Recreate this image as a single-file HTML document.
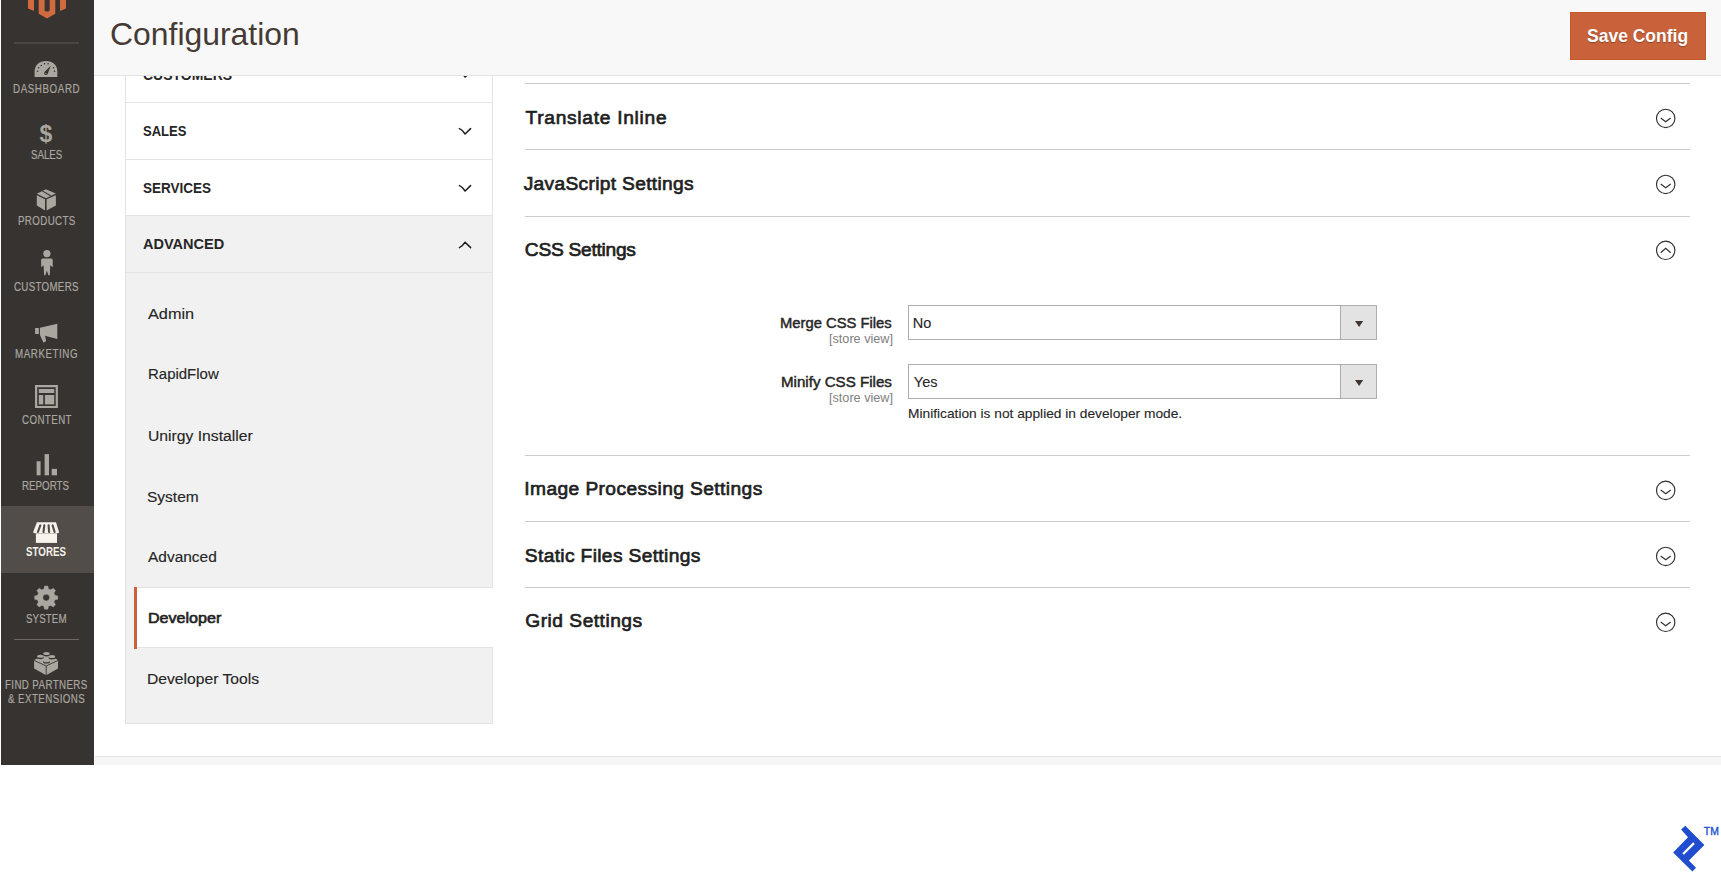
<!DOCTYPE html>
<html><head><meta charset="utf-8">
<style>
html,body{margin:0;padding:0;}
body{width:1721px;height:872px;overflow:hidden;background:#fff;position:relative;font-family:"Liberation Sans",sans-serif;}
.a{position:absolute;white-space:nowrap;line-height:1;}
#side{position:absolute;left:1px;top:0;width:93px;height:765px;background:#373330;}
#hdr{z-index:5;position:absolute;left:94px;top:0;width:1627px;height:75px;background:#f8f8f8;border-bottom:1px solid #e3e3e3;}
.hl{position:absolute;height:1px;background:#e3e3e3;}
.sec{position:absolute;left:525px;width:1165px;height:1px;background:#cccccc;}
</style></head><body>

<!-- Sidebar -->
<div id="side"></div>
<div class="a" style="left:1px;top:506px;width:93px;height:67px;background:#524d49;"></div>
<div class="a" style="left:14px;top:42px;width:65px;height:2px;background:#4a4643;"></div>
<div class="a" style="left:14px;top:639px;width:65px;height:1px;background:#6e6661;"></div>

<!-- Nav panel -->
<div class="a" style="left:125px;top:40px;width:366px;height:176px;background:#fff;border-left:1px solid #e3e3e3;border-right:1px solid #e3e3e3;"></div>
<div class="a" style="left:125px;top:216px;width:366px;height:507px;background:#f1f1f1;border-left:1px solid #e3e3e3;border-right:1px solid #e3e3e3;border-bottom:1px solid #e3e3e3;"></div>
<div class="hl" style="left:126px;top:102px;width:366px;"></div>
<div class="hl" style="left:126px;top:159px;width:366px;"></div>
<div class="hl" style="left:126px;top:215px;width:366px;"></div>
<div class="hl" style="left:126px;top:272px;width:366px;"></div>
<div class="a" style="left:134px;top:587px;width:359px;height:61px;background:#fff;border-top:1px solid #e3e3e3;border-bottom:1px solid #e3e3e3;box-sizing:border-box;"></div>
<div class="a" style="left:134px;top:587px;width:3px;height:62px;background:#c9623a;"></div>

<!-- Header -->
<div id="hdr"></div>
<div class="a" style="z-index:6;left:1570px;top:12px;width:136px;height:48px;box-sizing:border-box;background:#c9613a;border:1px solid #c4582a;"></div>

<!-- Footer band -->
<div class="a" style="left:95px;top:756px;width:1626px;height:8px;background:#f5f5f5;border-top:1px solid #e3e3e3;"></div>

<!-- Sections -->
<div class="sec" style="top:83px;"></div>
<div class="sec" style="top:149px;"></div>
<div class="sec" style="top:216px;"></div>
<div class="sec" style="top:455px;"></div>
<div class="sec" style="top:521px;"></div>
<div class="sec" style="top:587px;"></div>

<!-- Fields -->

<div class="a" style="left:908px;top:305px;width:469px;height:35px;box-sizing:border-box;border:1px solid #adadad;background:#fff;"></div>
<div class="a" style="left:1340px;top:306px;width:36px;height:33px;background:#e3e3e3;border-left:1px solid #adadad;box-sizing:border-box;"></div>

<div class="a" style="left:908px;top:364px;width:469px;height:35px;box-sizing:border-box;border:1px solid #adadad;background:#fff;"></div>
<div class="a" style="left:1340px;top:365px;width:36px;height:33px;background:#e3e3e3;border-left:1px solid #adadad;box-sizing:border-box;"></div>

<!--TXT-->
<div class="a" style="left:12.90px;top:82.53px;font-size:12.2px;font-weight:400;color:#aaa6a0;-webkit-text-stroke:0.2px #aaa6a0;letter-spacing:0.750px;transform:scaleX(0.8);transform-origin:0 0;">DASHBOARD</div>
<div class="a" style="left:30.90px;top:148.88px;font-size:12.2px;font-weight:400;color:#aaa6a0;-webkit-text-stroke:0.2px #aaa6a0;letter-spacing:-0.062px;transform:scaleX(0.8);transform-origin:0 0;">SALES</div>
<div class="a" style="left:17.90px;top:214.68px;font-size:12.2px;font-weight:400;color:#aaa6a0;-webkit-text-stroke:0.2px #aaa6a0;letter-spacing:0.464px;transform:scaleX(0.8);transform-origin:0 0;">PRODUCTS</div>
<div class="a" style="left:13.80px;top:281.28px;font-size:12.2px;font-weight:400;color:#aaa6a0;-webkit-text-stroke:0.2px #aaa6a0;letter-spacing:0.375px;transform:scaleX(0.8);transform-origin:0 0;">CUSTOMERS</div>
<div class="a" style="left:14.90px;top:347.68px;font-size:12.2px;font-weight:400;color:#aaa6a0;-webkit-text-stroke:0.2px #aaa6a0;letter-spacing:0.719px;transform:scaleX(0.8);transform-origin:0 0;">MARKETING</div>
<div class="a" style="left:21.80px;top:413.88px;font-size:12.2px;font-weight:400;color:#aaa6a0;-webkit-text-stroke:0.2px #aaa6a0;letter-spacing:0.500px;transform:scaleX(0.8);transform-origin:0 0;">CONTENT</div>
<div class="a" style="left:22.30px;top:479.68px;font-size:12.2px;font-weight:400;color:#aaa6a0;-webkit-text-stroke:0.2px #aaa6a0;letter-spacing:-0.000px;transform:scaleX(0.8);transform-origin:0 0;">REPORTS</div>
<div class="a" style="left:26.10px;top:545.78px;font-size:12.2px;font-weight:700;color:#f7f3eb;letter-spacing:0.025px;transform:scaleX(0.8);transform-origin:0 0;">STORES</div>
<div class="a" style="left:25.70px;top:612.68px;font-size:12.2px;font-weight:400;color:#aaa6a0;-webkit-text-stroke:0.2px #aaa6a0;letter-spacing:0.125px;transform:scaleX(0.8);transform-origin:0 0;">SYSTEM</div>
<div class="a" style="left:5.10px;top:678.73px;font-size:12.2px;font-weight:400;color:#aaa6a0;-webkit-text-stroke:0.2px #aaa6a0;letter-spacing:0.479px;transform:scaleX(0.8);transform-origin:0 0;">FIND PARTNERS</div>
<div class="a" style="left:7.80px;top:692.78px;font-size:12.2px;font-weight:400;color:#aaa6a0;-webkit-text-stroke:0.2px #aaa6a0;letter-spacing:0.545px;transform:scaleX(0.8);transform-origin:0 0;">&amp; EXTENSIONS</div>
<div class="a" style="left:143.20px;top:67.27px;font-size:15.4px;font-weight:700;color:#262626;transform:scaleX(0.9082);transform-origin:0 0;">CUSTOMERS</div>
<div class="a" style="left:142.70px;top:122.67px;font-size:15.4px;font-weight:700;color:#262626;transform:scaleX(0.8471);transform-origin:0 0;">SALES</div>
<div class="a" style="left:142.60px;top:179.87px;font-size:15.4px;font-weight:700;color:#262626;transform:scaleX(0.8779);transform-origin:0 0;">SERVICES</div>
<div class="a" style="left:142.60px;top:236.07px;font-size:15.4px;font-weight:700;color:#262626;transform:scaleX(0.9430);transform-origin:0 0;">ADVANCED</div>
<div class="a" style="left:147.80px;top:305.79px;font-size:15.5px;font-weight:400;color:#262626;-webkit-text-stroke:0.15px #262626;transform:scaleX(1.0512);transform-origin:0 0;">Admin</div>
<div class="a" style="left:147.63px;top:366.49px;font-size:15.5px;font-weight:400;color:#262626;-webkit-text-stroke:0.15px #262626;transform:scaleX(0.9658);transform-origin:0 0;">RapidFlow</div>
<div class="a" style="left:147.59px;top:427.69px;font-size:15.5px;font-weight:400;color:#262626;-webkit-text-stroke:0.15px #262626;transform:scaleX(1.0126);transform-origin:0 0;">Unirgy Installer</div>
<div class="a" style="left:147.00px;top:488.59px;font-size:15.5px;font-weight:400;color:#262626;-webkit-text-stroke:0.15px #262626;transform:scaleX(1.0000);transform-origin:0 0;">System</div>
<div class="a" style="left:148.00px;top:549.49px;font-size:15.5px;font-weight:400;color:#262626;-webkit-text-stroke:0.15px #262626;transform:scaleX(0.9971);transform-origin:0 0;">Advanced</div>
<div class="a" style="left:147.66px;top:610.49px;font-size:15.5px;font-weight:400;color:#1f1f1f;-webkit-text-stroke:0.65px #1f1f1f;transform:scaleX(1.0371);transform-origin:0 0;">Developer</div>
<div class="a" style="left:146.99px;top:671.49px;font-size:15.5px;font-weight:400;color:#262626;-webkit-text-stroke:0.15px #262626;transform:scaleX(1.0109);transform-origin:0 0;">Developer Tools</div>
<div class="a" style="z-index:6;left:109.68px;top:18.84px;font-size:31.4px;font-weight:400;color:#463b34;transform:scaleX(1.0163);transform-origin:0 0;">Configuration</div>
<div class="a" style="z-index:6;text-shadow:0 1px 1px rgba(0,0,0,.3);left:1587.09px;top:25.76px;font-size:19.2px;font-weight:700;color:#ffffff;transform:scaleX(0.9119);transform-origin:0 0;">Save Config</div>
<div class="a" style="left:525.50px;top:107.56px;font-size:19.2px;font-weight:400;color:#1f1f1f;-webkit-text-stroke:0.7px #1f1f1f;letter-spacing:0.707px;">Translate Inline</div>
<div class="a" style="left:523.70px;top:173.86px;font-size:19.2px;font-weight:400;color:#1f1f1f;-webkit-text-stroke:0.7px #1f1f1f;letter-spacing:0.317px;">JavaScript Settings</div>
<div class="a" style="left:524.80px;top:239.66px;font-size:19.2px;font-weight:400;color:#1f1f1f;-webkit-text-stroke:0.7px #1f1f1f;letter-spacing:-0.273px;">CSS Settings</div>
<div class="a" style="left:524.30px;top:478.66px;font-size:19.2px;font-weight:400;color:#1f1f1f;-webkit-text-stroke:0.7px #1f1f1f;letter-spacing:0.404px;">Image Processing Settings</div>
<div class="a" style="left:524.80px;top:545.76px;font-size:19.2px;font-weight:400;color:#1f1f1f;-webkit-text-stroke:0.7px #1f1f1f;letter-spacing:0.350px;">Static Files Settings</div>
<div class="a" style="left:525.30px;top:611.36px;font-size:19.2px;font-weight:400;color:#1f1f1f;-webkit-text-stroke:0.7px #1f1f1f;letter-spacing:0.492px;">Grid Settings</div>
<div class="a" style="left:780.39px;top:315.75px;font-size:14.6px;font-weight:400;color:#262626;-webkit-text-stroke:0.45px #262626;transform:scaleX(1.0128);transform-origin:0 0;">Merge CSS Files</div>
<div class="a" style="left:828.55px;top:332.85px;font-size:12px;font-weight:400;color:#808080;transform:scaleX(1.0542);transform-origin:0 0;">[store view]</div>
<div class="a" style="left:780.96px;top:375.05px;font-size:14.6px;font-weight:400;color:#262626;-webkit-text-stroke:0.45px #262626;transform:scaleX(1.0358);transform-origin:0 0;">Minify CSS Files</div>
<div class="a" style="left:828.55px;top:391.85px;font-size:12px;font-weight:400;color:#808080;transform:scaleX(1.0542);transform-origin:0 0;">[store view]</div>
<div class="a" style="left:912.80px;top:316.23px;font-size:14.5px;font-weight:400;color:#262626;-webkit-text-stroke:0.1px #262626;">No</div>
<div class="a" style="left:913.80px;top:375.13px;font-size:14.5px;font-weight:400;color:#262626;-webkit-text-stroke:0.1px #262626;">Yes</div>
<div class="a" style="left:907.57px;top:407.06px;font-size:13.4px;font-weight:400;color:#262626;-webkit-text-stroke:0.1px #262626;transform:scaleX(1.0260);transform-origin:0 0;">Minification is not applied in developer mode.</div>
<!--/TXT-->

<!-- SVG overlay for icons -->
<svg class="a" style="left:0;top:0;z-index:3;" width="1721" height="872" viewBox="0 0 1721 872">
  <!-- magento logo -->
  <g fill="#cf6b3f">
    <path d="M28,0 H34 V11 L28,8.5 Z"/>
    <path d="M60,0 H66 V8.5 L60,11 Z"/>
    <path d="M38.7,0 H44.6 V10 Q44.6,11.5 47,11.5 Q49.7,11.5 49.7,10 V0 H55.3 V13.7 L47,18.5 L38.7,13.7 Z"/>
  </g>
  <!-- dashboard gauge -->
  <path fill="#aaa6a0" d="M34.6,77.1 L34.6,71 C34.6,65 39.7,60.9 46,60.9 C52.3,60.9 57.3,65 57.3,71 L57.3,77.1 Z"/>
  <g fill="#373330">
    <circle cx="37.5" cy="71.3" r="0.8"/><circle cx="38.6" cy="67.8" r="0.8"/><circle cx="41.3" cy="65.5" r="0.8"/>
    <circle cx="44.5" cy="63.7" r="0.8"/><circle cx="48.1" cy="63.7" r="0.8"/><circle cx="53.5" cy="67.8" r="0.8"/><circle cx="54.5" cy="71.3" r="0.8"/>
    <path d="M44.2,72.3 L50.8,65.8 L47.6,74 Z"/><circle cx="45.9" cy="73.4" r="1.7"/><circle cx="45.9" cy="73.7" r="0.6" fill="#aaa6a0"/>
  </g>
  <!-- $ -->
  <text x="45.8" y="141.5" text-anchor="middle" font-family="Liberation Sans" font-weight="bold" font-size="23" fill="#aaa6a0">$</text>
  <!-- products box -->
  <g fill="#aaa6a0">
    <path d="M36.8,193.8 L45.8,189.2 L55.9,193.6 L46,198.3 Z"/>
    <path d="M36.8,195.2 L45,199.2 L45,210.4 L36.8,205.6 Z"/>
    <path d="M46.6,199.2 L55.9,195.2 L55.9,205.6 L46.6,210.4 Z"/>
  </g>
  <path d="M42.3,190.9 L50.6,195.8" stroke="#373330" stroke-width="1.1"/>
  <!-- person -->
  <g fill="#aaa6a0">
    <circle cx="46.9" cy="253.6" r="3.6"/>
    <path d="M42.4,258.6 L51.4,258.6 Q52.7,258.6 52.7,260.2 L52.8,267.2 L50.3,265.2 L49.8,275.2 L48.4,275.2 L46.9,270.6 L45.4,275.2 L44.1,275.2 L43.6,265.2 L41.2,267.3 L41.1,260.2 Q41.1,258.6 42.4,258.6 Z"/>
  </g>
  <!-- megaphone -->
  <g fill="#aaa6a0">
    <rect x="35.1" y="328" width="3.7" height="6"/>
    <path d="M39.9,327.8 L57.3,323.8 L57.3,338.9 L45,335.8 L46.2,341 L43.5,342.8 L39.9,335 Z"/>
  </g>
  <!-- content -->
  <g fill="#aaa6a0">
    <path fill-rule="evenodd" d="M35,385.1 H57.9 V408.1 H35 Z M37.2,387.3 V405.9 H55.7 V387.3 Z"/>
    <rect x="38.8" y="389" width="15.4" height="4"/>
    <rect x="38.8" y="395" width="4.4" height="9.4"/>
    <rect x="44.9" y="395" width="9.3" height="9.4"/>
  </g>
  <!-- reports -->
  <g fill="#aaa6a0">
    <rect x="36.6" y="461.3" width="4" height="14"/>
    <rect x="44.6" y="454.1" width="4.4" height="21.2"/>
    <rect x="51.7" y="468.9" width="5.3" height="6.4"/>
  </g>
  <!-- stores -->
  <g fill="#f7f3eb">
    <path d="M36.9,522.2 L56,522.2 L59,532 Q59,533.2 57.5,533.2 L35,533.2 Q33.2,533.2 33.2,532 Z"/>
    <rect x="35.9" y="533.4" width="21.1" height="9.5"/>
  </g>
  <g stroke="#524d49" stroke-width="2.1" stroke-linecap="round">
    <path d="M40.3,525.4 L37.9,532"/><path d="M44.3,525.4 L43.5,532"/><path d="M48.6,525.4 L49.1,532"/><path d="M52.6,525.4 L54.6,532"/>
  </g>
  <!-- gear -->
  <path fill="#aaa6a0" fill-rule="evenodd" stroke="#aaa6a0" stroke-width="0.4" stroke-linejoin="round" d="M43.87,588.91 L44.57,586.01 L47.83,586.01 L48.53,588.91 L50.70,589.81 L53.24,588.26 L55.54,590.56 L53.99,593.10 L54.89,595.27 L57.79,595.97 L57.79,599.23 L54.89,599.93 L53.99,602.10 L55.54,604.64 L53.24,606.94 L50.70,605.39 L48.53,606.29 L47.83,609.19 L44.57,609.19 L43.87,606.29 L41.70,605.39 L39.16,606.94 L36.86,604.64 L38.41,602.10 L37.51,599.93 L34.61,599.23 L34.61,595.97 L37.51,595.27 L38.41,593.10 L36.86,590.56 L39.16,588.26 L41.70,589.81 Z M49.50,597.60 A3.3,3.3 0 1 0 42.90,597.60 A3.3,3.3 0 1 0 49.50,597.60 Z"/>
  <!-- lego -->
  <path fill="#aaa6a0" d="M34.1,659.9 L46.2,654 L58,659.9 L58,668.6 L46.2,675.2 L34.1,668.6 Z"/>
  <path fill="none" stroke="#373330" stroke-width="0.9" d="M34.1,660.4 L46.2,666 L58,660.4 M46.2,666 V675.5"/>
  <g>
    <ellipse cx="46.5" cy="654.7" rx="3.4" ry="1.7" fill="#373330"/><ellipse cx="46.5" cy="653.5" rx="3.2" ry="1.5" fill="#aaa6a0"/>
    <ellipse cx="40.3" cy="657.5" rx="3.4" ry="1.7" fill="#373330"/><ellipse cx="40.3" cy="656.3" rx="3.2" ry="1.5" fill="#aaa6a0"/>
    <ellipse cx="52" cy="657.8" rx="3.4" ry="1.7" fill="#373330"/><ellipse cx="52" cy="656.6" rx="3.2" ry="1.5" fill="#aaa6a0"/>
    <ellipse cx="46.5" cy="661.9" rx="3.4" ry="1.7" fill="#373330"/><ellipse cx="46.5" cy="660.7" rx="3.2" ry="1.5" fill="#aaa6a0"/>
  </g>

  <!-- nav chevrons -->
  <g fill="none" stroke="#1e1e1e" stroke-width="1.5" stroke-linecap="round" stroke-linejoin="round">
    <path d="M459.4,71.6 Q462.5,72.8 465.1,77 L470.6,71.6"/>
    <path d="M459.4,128.6 Q462.5,129.8 465.1,134 L470.6,128.6"/>
    <path d="M459.4,185.6 Q462.5,186.8 465.1,191 L470.6,185.6"/>
    <path d="M459.4,247.6 Q462.5,246.4 465.1,242.2 L470.6,247.6"/>
  </g>
  <!-- section circles -->
  <g fill="none" stroke="#303030" stroke-width="1.15">
    <circle cx="1665.7" cy="118.4" r="9.2"/>
    <circle cx="1665.7" cy="184.4" r="9.2"/>
    <circle cx="1665.7" cy="250.3" r="9.2"/>
    <circle cx="1665.7" cy="490.4" r="9.2"/>
    <circle cx="1665.7" cy="556.4" r="9.2"/>
    <circle cx="1665.7" cy="622.3" r="9.2"/>
    <path d="M1660.7,118 L1665.7,121.7 L1670.7,118"/>
    <path d="M1660.7,184 L1665.7,187.7 L1670.7,184"/>
    <path d="M1660.7,252.7 L1665.7,248.2 L1670.7,252.7"/>
    <path d="M1660.7,490 L1665.7,493.7 L1670.7,490"/>
    <path d="M1660.7,556 L1665.7,559.7 L1670.7,556"/>
    <path d="M1660.7,622 L1665.7,625.7 L1670.7,622"/>
  </g>
  <!-- select arrows -->
  <g fill="#41362f">
    <path d="M1355,321 L1363.2,321 L1359.1,327 Z"/>
    <path d="M1355,380 L1363.2,380 L1359.1,386 Z"/>
  </g>
  <!-- toptal -->
  <g fill="#204ecf">
    <path fill-rule="evenodd" d="M1681.1,829.5 L1685.3,825.7 L1704.4,845 L1688.9,860.5 L1696,867.7 L1692.4,871.6 L1673.1,852.5 L1688,837.3 Z M1682.3,853.2 L1683.9,854.8 L1694.8,843.9 L1693.2,842.3 Z"/>
  </g>
  <text x="1703.8" y="834.6" font-family="Liberation Sans" font-size="11.2" stroke="#204ecf" stroke-width="0.35" fill="#204ecf" textLength="15" lengthAdjust="spacingAndGlyphs">TM</text>
</svg>
</body></html>
